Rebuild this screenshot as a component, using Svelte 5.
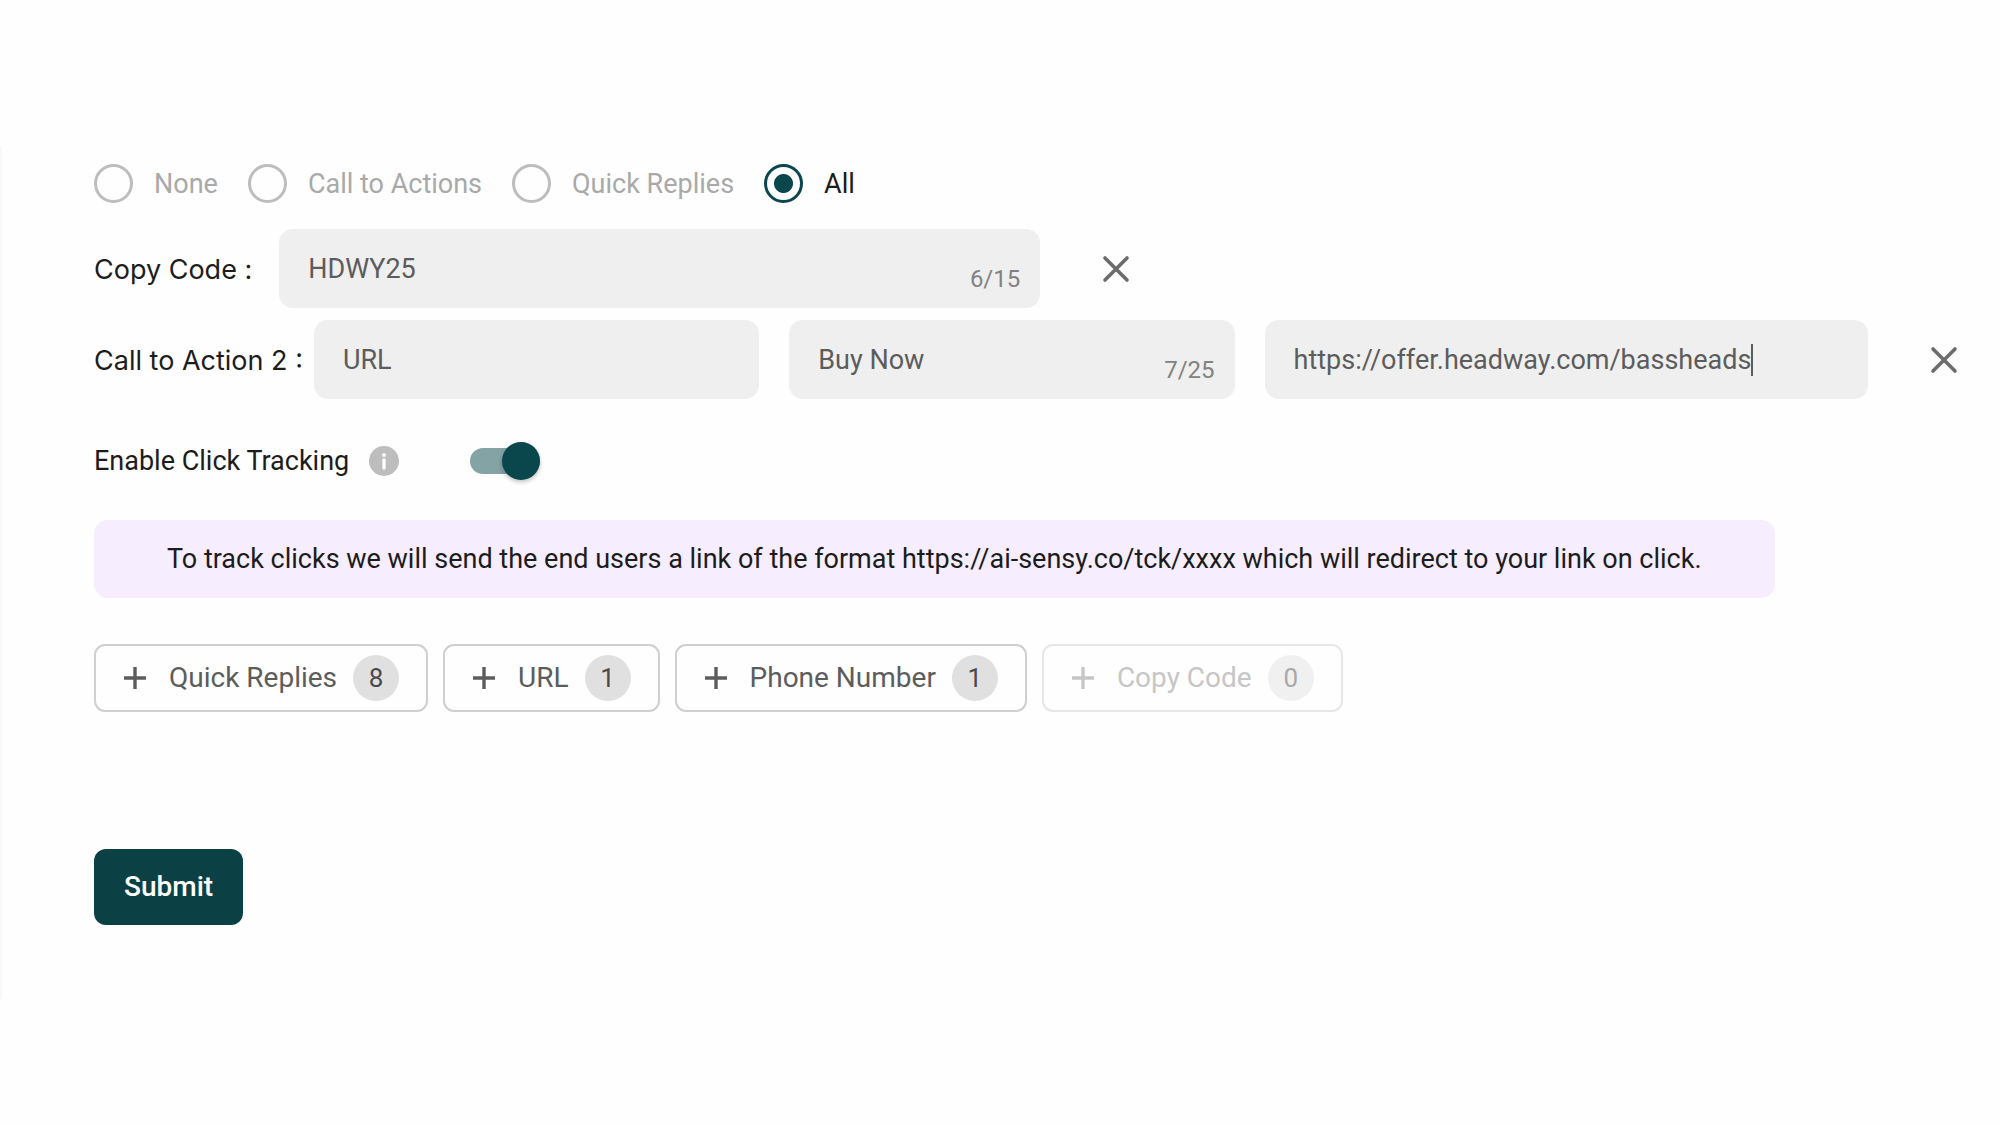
<script>
  const modes = ['None', 'Call to Actions', 'Quick Replies', 'All'];
  let mode = $state('All');
  let code = $state('HDWY25');
  let actionType = $state('URL');
  let title = $state('Buy Now');
  let link = $state('https://offer.headway.com/bassheads');
  let tracking = $state(true);

  const adders = [
    { label: 'Quick Replies', count: 8 },
    { label: 'URL', count: 1 },
    { label: 'Phone Number', count: 1 },
    { label: 'Copy Code', count: 0 }
  ];
</script>

{#snippet closeIcon()}
  <svg class="close-icon" viewBox="0 0 28 28" aria-hidden="true">
    <path d="M3 3L25 25M25 3L3 25" fill="none" stroke="currentColor" stroke-width="3.6" stroke-linecap="round" />
  </svg>
{/snippet}

<form class="panel" onsubmit={(e) => e.preventDefault()}>
  <div class="modes" role="radiogroup" aria-label="Interactive actions">
    {#each modes as m}
      <label class="mode" class:active={mode === m}>
        <input type="radio" name="mode" value={m} bind:group={mode} />
        <span>{m}</span>
      </label>
    {/each}
  </div>

  <div class="row">
    <label class="row-label" for="copy-code">Copy Code :</label>
    <div class="field code">
      <input id="copy-code" type="text" maxlength="15" bind:value={code} />
      <span class="counter">{code.length}/15</span>
    </div>
    <button class="remove" type="button" aria-label="Remove copy code">{@render closeIcon()}</button>
  </div>

  <div class="row actions">
    <label class="row-label" for="action-type">Call to Action 2 :</label>
    <div class="fields">
      <div class="field">
        <select id="action-type" bind:value={actionType}>
          <option>URL</option>
          <option>Phone Number</option>
        </select>
      </div>
      <div class="field">
        <input type="text" aria-label="Button title" maxlength="25" bind:value={title} />
        <span class="counter">{title.length}/25</span>
      </div>
      <div class="field link">
        <input type="text" aria-label="Button link" bind:value={link} />
        <span class="caret"></span>
      </div>
    </div>
    <button class="remove" type="button" aria-label="Remove call to action">{@render closeIcon()}</button>
  </div>

  <div class="tracking">
    <label for="tracking">Enable Click Tracking</label>
    <svg class="info" viewBox="0 0 30 30" aria-hidden="true">
      <circle cx="15" cy="15" r="15" fill="#bdbdbd" />
      <circle cx="15" cy="9" r="2" fill="#fff" />
      <path d="M15 14V22" stroke="#fff" stroke-width="3.4" stroke-linecap="round" />
    </svg>
    <input id="tracking" class="switch" type="checkbox" role="switch" bind:checked={tracking} />
  </div>

  <p class="note">
    To track clicks we will send the end users a link of the format https://ai-sensy.co/tck/xxxx which will redirect to your link on click.
  </p>

  <div class="adders">
    {#each adders as a}
      <button class="adder" type="button" disabled={a.count === 0}>
        <svg class="plus" viewBox="0 0 24 24" aria-hidden="true">
          <path d="M12 1V23M1 12H23" fill="none" stroke="currentColor" stroke-width="3.4" />
        </svg>
        <span>{a.label}</span>
        <span class="badge">{a.count}</span>
      </button>
    {/each}
  </div>

  <button class="submit" type="submit">Submit</button>
</form>

<style>
  :global(body) {
    background: #fefefe;
  }

  .panel {
    box-sizing: border-box;
    margin-top: 146px;
    padding: 18px 42px 74px 92px;
    border-left: 2px solid #f8f8f8;
    font-family: Roboto, sans-serif;
    font-size: 27px;
    line-height: 32px;
    color: #1c1c1c;
  }

  input,
  select,
  button {
    font: inherit;
    color: inherit;
    margin: 0;
  }

  .modes {
    display: flex;
    flex-wrap: wrap;
    gap: 30px;
    margin-bottom: 26px;
  }

  .mode {
    display: flex;
    align-items: center;
    gap: 21px;
    color: #a9a9a9;
  }

  .mode.active {
    color: #1c1c1c;
  }

  .mode input {
    appearance: none;
    box-sizing: border-box;
    width: 39px;
    height: 39px;
    border: 3px solid #bdbdbd;
    border-radius: 50%;
  }

  .mode input:checked {
    border-color: #0a474c;
    background: radial-gradient(circle, #0a474c 9px, transparent 10px);
  }

  .row {
    display: flex;
    align-items: center;
    margin-bottom: 12px;
  }

  .row-label {
    padding-top: 2px;
    margin-right: 27px;
    font-family: Inter, sans-serif;
    white-space: nowrap;
  }

  .actions .row-label {
    margin-right: 11px;
  }

  .fields {
    flex: 1;
    display: grid;
    grid-template-columns: 445fr 445fr 603fr;
    gap: 30px;
  }

  .field {
    box-sizing: border-box;
    display: flex;
    min-width: 0;
    height: 79px;
    padding: 0 20px 0 29px;
    border-radius: 14px;
    background: #efefef;
    color: #5c5c5c;
  }

  .field.code {
    width: 41%;
    max-width: 761px;
  }

  .field input,
  .field select {
    appearance: none;
    flex: 1;
    min-width: 0;
    padding: 0;
    border: 0;
    outline: 0;
    background: none;
  }

  .field.link {
    align-items: center;
  }

  .field.link input {
    field-sizing: content;
    flex: 0 1 auto;
  }

  .caret {
    width: 2px;
    height: 32px;
    background: #5c5c5c;
  }

  .counter {
    align-self: flex-end;
    padding-bottom: 14px;
    font-size: 24px;
    line-height: 30px;
    color: #828282;
  }

  .remove {
    display: flex;
    margin-left: 62px;
    padding: 0;
    border: 0;
    background: none;
    color: #6b6b6b;
  }

  .close-icon {
    width: 28px;
    height: 28px;
  }

  .tracking {
    display: flex;
    align-items: center;
    margin-top: 46px;
  }

  .info {
    width: 30px;
    height: 30px;
    margin: 0 71px 0 20px;
  }

  .switch {
    appearance: none;
    display: flex;
    align-items: center;
    width: 70px;
    height: 26px;
    border-radius: 13px;
    background: #84a3a5;
  }

  .switch::before {
    content: '';
    width: 38px;
    height: 38px;
    border-radius: 50%;
    background: #0a474c;
    box-shadow: 0 2px 4px rgb(0 0 0 / 25%);
  }

  .switch:checked::before {
    margin-left: auto;
  }

  .note {
    box-sizing: border-box;
    width: fit-content;
    margin: 43px 0 46px;
    padding: 23px 73px;
    border-radius: 14px;
    background: #f6edff;
  }

  .adders {
    display: flex;
    flex-wrap: wrap;
    gap: 15px;
  }

  .adder {
    display: flex;
    align-items: center;
    height: 68px;
    padding: 0 27px;
    border: 2px solid #cfcfcf;
    border-radius: 11px;
    background: none;
    color: #5c5c5c;
    font-size: 28px;
  }

  .adder:disabled {
    border-color: #e7e7e7;
    color: #c6c6c6;
  }

  .plus {
    width: 24px;
    height: 24px;
    margin-right: 22px;
  }

  .badge {
    width: 46px;
    margin-left: 16px;
    border-radius: 50%;
    background: #e0e0e0;
    color: #4a4a4a;
    font-size: 26px;
    line-height: 46px;
    text-align: center;
  }

  .adder:disabled .badge {
    background: #f0f0f0;
    color: #a9a9a9;
  }

  .submit {
    height: 76px;
    margin-top: 137px;
    padding: 0 30px;
    border: 0;
    border-radius: 12px;
    background: #0b4145;
    color: #fff;
    font-size: 28px;
    font-weight: 500;
  }
</style>
